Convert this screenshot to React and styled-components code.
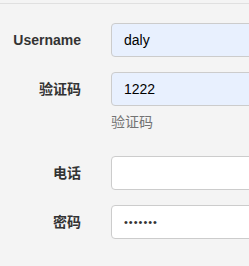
import React from "react";
import styled, { createGlobalStyle } from "styled-components";

const GlobalStyle = createGlobalStyle`
  html, body {
    margin: 0;
    padding: 0;
    background: #f4f4f4;
  }
  body {
    font-family: "Liberation Sans", Arial, "Noto Sans CJK SC", sans-serif;
    font-size: 14px;
    line-height: 20px;
    color: #333;
  }
`;

const Page = styled.div`
  margin-top: 3px;
  border-top: 1px solid #e0e0e0;
  padding-top: 19px;
  overflow: hidden;
`;

const Form = styled.form`
  display: flex;
  flex-direction: column;
  width: 400px;
`;

const Group = styled.div`
  display: grid;
  grid-template-columns: 96px 1fr;
  margin-bottom: 15px;
`;

const Label = styled.label`
  text-align: right;
  padding-top: 7px;
  padding-right: 15px;
  font-weight: bold;
  font-family: "Liberation Sans", Arial, "Noto Sans CJK SC", sans-serif;
`;

const Field = styled.div`
  padding-left: 15px;
  display: flex;
  flex-direction: column;
`;

const Input = styled.input`
  box-sizing: border-box;
  height: 34px;
  width: 100%;
  padding: 6px 12px;
  font-size: 14px;
  font-family: "Liberation Sans", Arial, sans-serif;
  color: #000;
  background: ${(p) => (p.$filled ? "#e8f0fe" : "#fff")};
  border: 1px solid #ccc;
  border-radius: 4px;
  outline: none;

  &[type="password"] {
    font-size: 11px;
    letter-spacing: 1px;
    color: #333;
  }
`;

const Help = styled.span`
  display: block;
  margin-top: 5px;
  margin-bottom: 10px;
  color: #737373;
  font-family: "Noto Sans CJK SC", sans-serif;
`;

export default function App() {
  return (
    <>
      <GlobalStyle />
      <Page>
        <Form>
          <Group>
            <Label>Username</Label>
            <Field>
              <Input $filled defaultValue="daly" />
            </Field>
          </Group>
          <Group>
            <Label>验证码</Label>
            <Field>
              <Input $filled defaultValue="1222" />
              <Help>验证码</Help>
            </Field>
          </Group>
          <Group>
            <Label>电话</Label>
            <Field>
              <Input />
            </Field>
          </Group>
          <Group>
            <Label>密码</Label>
            <Field>
              <Input type="password" defaultValue="1234567" />
            </Field>
          </Group>
        </Form>
      </Page>
    </>
  );
}
